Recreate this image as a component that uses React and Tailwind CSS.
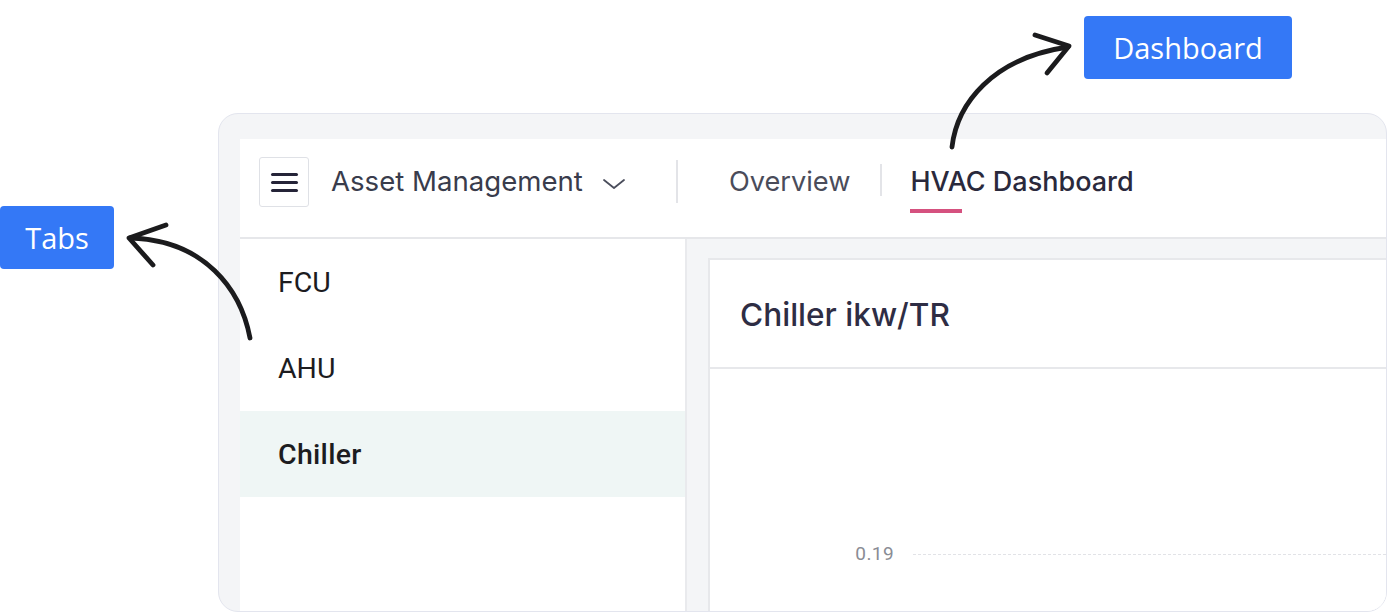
import React from 'react';

const sideItems = [
  { label: 'FCU', active: false },
  { label: 'AHU', active: false },
  { label: 'Chiller', active: true },
];

// hand-drawn style annotation arrows, laid over the page
const Arrows = () => (
  <svg
    className="absolute inset-0 pointer-events-none"
    width="1388"
    height="614"
    viewBox="0 0 1388 614"
    fill="none"
    stroke="#1b1b1d"
    strokeWidth="4.8"
    strokeLinecap="round"
    strokeLinejoin="round"
  >
    <path d="M952 147 C 957 104, 992 58, 1068 47" />
    <path d="M1035 35 L1069 46 L1047 73" />
    <path d="M250 338 C 241 290, 205 240, 130 238" />
    <path d="M166 225 L129 238 L153 265" />
  </svg>
);

const Label = ({ children, className }) => (
  <div
    className={`absolute flex items-center justify-center rounded-[4px] bg-[#3478f6] text-white text-[29px] font-['Open_Sans',sans-serif] ${className}`}
  >
    {children}
  </div>
);

const App = () => {
  return (
    <div className="relative w-[1388px] h-[614px] overflow-hidden bg-white font-['Inter',sans-serif]">
      <div className="ml-[218px] mt-[113px] w-[1169px] h-[499px] rounded-[20px] border border-[#e3e5ee] bg-[#f4f5f7] pl-[21px] pt-[25px] overflow-hidden">
        <div className="flex flex-col h-full bg-white">
          {/* top bar */}
          <div className="flex items-start h-[100px] shrink-0 border-b-2 border-[#e6e7ea] pl-[19px] pt-[18px]">
            <button className="flex items-center justify-center w-[50px] h-[50px] rounded-[3px] border border-[#dfe1e6] bg-white">
              <span className="flex flex-col gap-[5px]">
                <span className="block w-[27px] h-[3px] rounded-full bg-[#252438]" />
                <span className="block w-[27px] h-[3px] rounded-full bg-[#252438]" />
                <span className="block w-[27px] h-[3px] rounded-full bg-[#252438]" />
              </span>
            </button>
            <div className="flex items-center h-[50px] ml-[22px]">
              <span className="text-[27.6px] text-[#393c4c]">Asset Management</span>
              <svg className="ml-[19px] mt-[4px]" width="24" height="14" viewBox="0 0 24 14" fill="none" stroke="#4b4e5c" strokeWidth="1.8" strokeLinecap="round" strokeLinejoin="round">
                <path d="M2 3 L12 11 L22 3" />
              </svg>
            </div>
            <div className="w-[2px] h-[43px] bg-[#e3e4e8] ml-[50px] mt-[3px]" />
            <div className="flex items-center h-[50px] ml-[51px]">
              <span className="text-[27.2px] text-[#4a4c5a]">Overview</span>
            </div>
            <div className="w-[2px] h-[32px] bg-[#e3e4e8] ml-[30px] mt-[7px]" />
            <div className="flex flex-col ml-[28px]">
              <div className="flex items-center h-[50px]">
                <span className="text-[27px] font-medium text-[#2a293c]">HVAC Dashboard</span>
              </div>
              <div className="w-[52px] h-[4px] bg-[#d5517f] mt-[2px]" />
            </div>
          </div>

          {/* body */}
          <div className="flex flex-1 min-h-0">
            <div className="w-[447px] shrink-0 bg-white border-r-2 border-[#e9eaed]">
              {sideItems.map((item) => (
                <div
                  key={item.label}
                  className={`flex items-center h-[86px] pl-[38px] pt-[3px] text-[28.5px] font-['Roboto',sans-serif] text-[#1c1c1f] ${
                    item.active ? 'bg-[#eff6f5] font-medium tracking-[0.3px]' : ''
                  }`}
                >
                  {item.label}
                </div>
              ))}
            </div>
            <div className="flex-1 bg-[#f4f5f7] pl-[21px] pt-[19px]">
              <div className="h-full bg-white border-l-2 border-t-2 border-[#e7e8eb] flex flex-col">
                <div className="flex items-center h-[109px] shrink-0 pl-[30px] pt-[2px] border-b-2 border-[#e7e8eb]">
                  <span className="text-[31.6px] font-medium text-[#2e2d44]">Chiller ikw/TR</span>
                </div>
                <div className="flex-1 pt-[171px]">
                  <div className="flex items-center">
                    <span className="w-[184px] text-right text-[19px] tracking-[0.4px] text-[#8a8c94] font-['Roboto',sans-serif]">0.19</span>
                    <div className="flex-1 ml-[19px] border-t border-dashed border-[#e2e3e7]" />
                  </div>
                </div>
              </div>
            </div>
          </div>
        </div>
      </div>

      <Label className="left-[1084px] top-[16px] w-[208px] h-[63px]">Dashboard</Label>
      <Label className="left-0 top-[206px] w-[114px] h-[63px]">Tabs</Label>
      <Arrows />
    </div>
  );
};

export default App;
